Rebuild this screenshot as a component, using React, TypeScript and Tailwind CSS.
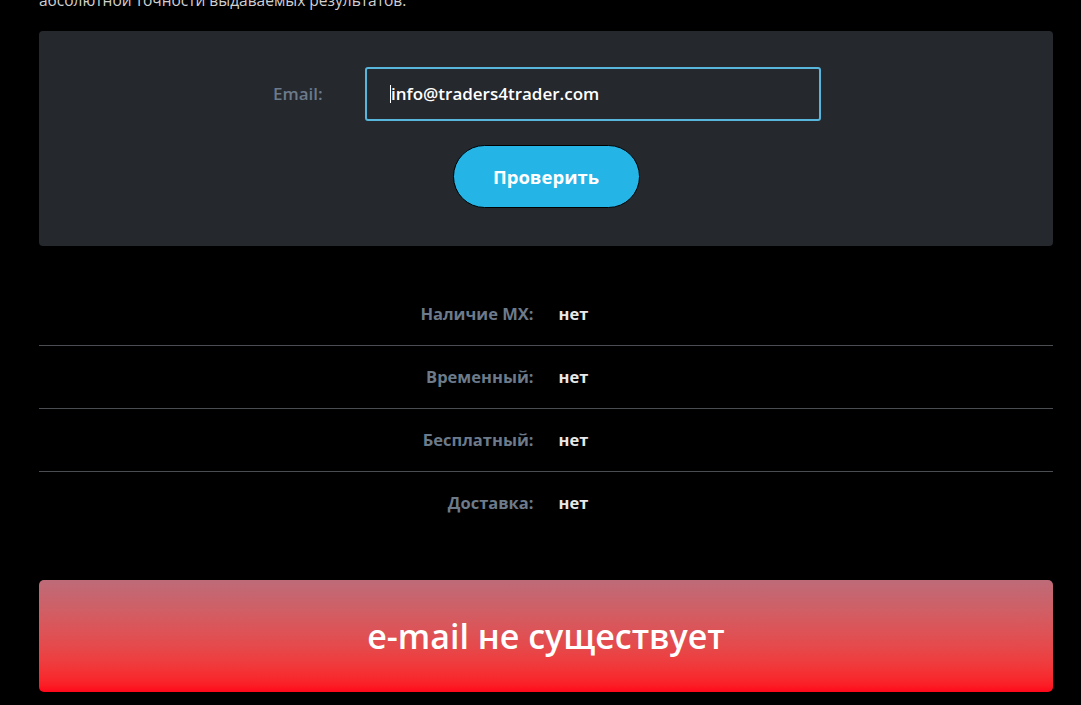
import React from 'react';

interface ResultRow {
  label: string;
  value: string;
}

const rows: ResultRow[] = [
  { label: 'Наличие MX:', value: 'нет' },
  { label: 'Временный:', value: 'нет' },
  { label: 'Бесплатный:', value: 'нет' },
  { label: 'Доставка:', value: 'нет' },
];

const font = { fontFamily: '"Open Sans", "Noto Sans", sans-serif' };

export default function App() {
  return (
    <div className="min-h-[705px] w-full overflow-hidden bg-black" style={font}>
      <div className="ml-[39px] w-[1014px]">
        <p className="mt-[-10px] text-[15.5px] leading-[20px] text-[#d0d0d0]">
          абсолютной точности выдаваемых результатов.
        </p>

        {/* Check form */}
        <div className="mt-[21px] h-[215px] rounded-[4px] bg-[#25282d] pt-[36px]">
          <div className="flex items-center">
            <label className="ml-[234px] w-[92px] text-[17px] font-semibold text-[#6c7a8a]">
              Email:
            </label>
            <div className="flex h-[54px] w-[456px] items-center rounded-[3px] border-2 border-[#58b6dd] pl-[23px]">
              <span className="h-[18px] w-px bg-white" />
              <span className="text-[17px] font-semibold text-white">info@traders4trader.com</span>
            </div>
          </div>
          <div className="mt-[24px] flex justify-center">
            <button className="h-[63px] w-[187px] rounded-full border border-black bg-[#24b4e6] text-[18.5px] font-bold text-white">
              Проверить
            </button>
          </div>
        </div>

        {/* Results */}
        <div className="mt-[37px]">
          {rows.map((row, index) => (
            <div
              key={row.label}
              className={`grid h-[63px] grid-cols-2 items-center gap-[25px] ${
                index < rows.length - 1 ? 'border-b border-[#4a4d52]' : ''
              }`}
            >
              <span className="text-right text-[16.5px] font-bold text-[#6c7a8a]">{row.label}</span>
              <span className="text-[16.5px] font-bold text-[#e8e8e8]">{row.value}</span>
            </div>
          ))}
        </div>

        {/* Status banner */}
        <div className="mt-[45px] flex h-[112px] items-center justify-center rounded-[5px] bg-gradient-to-b from-[#bd6b78] to-[#ff0519]">
          <span className="text-[34px] font-semibold text-white">e-mail не существует</span>
        </div>
      </div>
    </div>
  );
}
